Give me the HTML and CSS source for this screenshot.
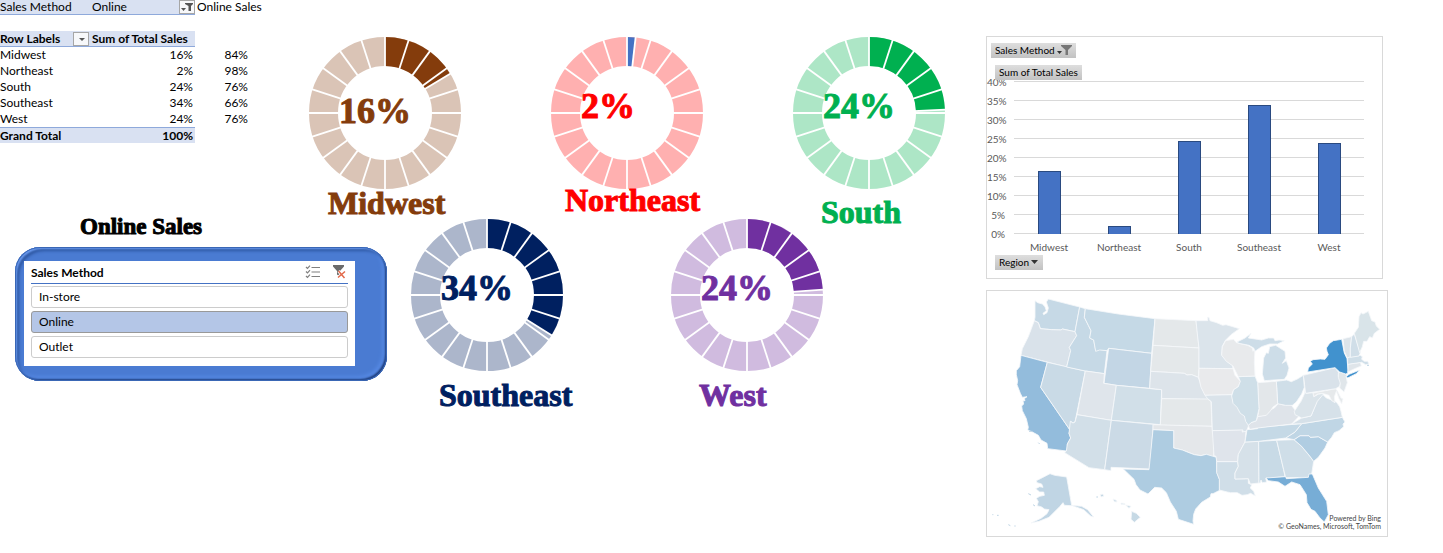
FILE: index.html
```html
<!DOCTYPE html>
<html lang="en">
<head>
<meta charset="utf-8">
<title>Online Sales</title>
<link rel="stylesheet" href="styles.css">
</head>
<body>
<svg class="defs" aria-hidden="true">
  <defs>
    <g id="spokes" stroke="#fff" stroke-width="1.8">
      <path d="M0-78V78"/>
      <path d="M0-78V78" transform="rotate(18)"/>
      <path d="M0-78V78" transform="rotate(36)"/>
      <path d="M0-78V78" transform="rotate(54)"/>
      <path d="M0-78V78" transform="rotate(72)"/>
      <path d="M0-78V78" transform="rotate(90)"/>
      <path d="M0-78V78" transform="rotate(108)"/>
      <path d="M0-78V78" transform="rotate(126)"/>
      <path d="M0-78V78" transform="rotate(144)"/>
      <path d="M0-78V78" transform="rotate(162)"/>
    </g>
  </defs>
</svg>
<main class="sheet">
  <section class="left">
    <table class="pivot">
      <colgroup><col class="col-a"><col class="col-b"><col class="col-c"></colgroup>
      <tbody>
        <tr class="page-filter">
          <td>Sales Method</td>
          <td><div class="cell-flex"><span class="indent">Online</span><button class="cell-btn" type="button" aria-label="Filter Sales Method"><svg width="13" height="12" viewBox="0 0 13 12"><path d="M4 2h8v1L10 5v5H7.500V5L4 3z" fill="#555"/><path d="M0 7h5L2.500 10z" fill="#555"/></svg></button></div></td>
          <td class="plain">Online Sales</td>
        </tr>
        <tr class="blank"><td colspan="3"></td></tr>
        <tr class="head">
          <th scope="col"><div class="cell-flex"><span>Row Labels</span><button class="cell-btn" type="button" aria-label="Filter row labels"><svg width="13" height="12" viewBox="0 0 13 12"><path d="M4 5h6L7 8z" fill="#555"/></svg></button></div></th>
          <th scope="col"><span class="indent">Sum of Total Sales</span></th>
          <td class="plain"></td>
        </tr>
        <tr><td>Midwest</td><td class="num">16%</td><td class="num">84%</td></tr>
        <tr><td>Northeast</td><td class="num">2%</td><td class="num">98%</td></tr>
        <tr><td>South</td><td class="num">24%</td><td class="num">76%</td></tr>
        <tr><td>Southeast</td><td class="num">34%</td><td class="num">66%</td></tr>
        <tr><td>West</td><td class="num">24%</td><td class="num">76%</td></tr>
        <tr class="total"><th scope="row">Grand Total</th><td class="num">100%</td><td class="plain"></td></tr>
      </tbody>
    </table>

    <h1 class="title">Online Sales</h1>

    <div class="frame">
      <div class="slicer">
        <div class="slicer-head">
          <h2>Sales Method</h2>
          <button class="icon-btn" type="button" aria-label="Multi-select">
            <svg width="16" height="14" viewBox="0 0 16 14" fill="none" stroke="#7f7f7f" stroke-width="1.200"><path d="M6.500 2.500H15M6.500 7H15M6.500 11.500H15"/><path d="M1 2l1.500 1.500L5 .7M1 6.500L2.500 8 5 5.200M1 11l1.500 1.500L5 9.700"/></svg>
          </button>
          <button class="icon-btn" type="button" aria-label="Clear filter">
            <svg width="16" height="14" viewBox="0 0 16 14"><path d="M2 0h11v1.500L9 6v3l-1 2-2-1.500V6L2 1.500z" fill="#6b6b6b"/><path d="M7.500 6l6 7M14 6.500l-7 6" stroke="#fff" stroke-width="3"/><path d="M7.500 6l6 7M14 6.500l-7 6" stroke="#e2694a" stroke-width="1.500"/></svg>
          </button>
        </div>
        <div class="slicer-items">
          <button type="button" class="item">In-store</button>
          <button type="button" class="item selected" aria-pressed="true">Online</button>
          <button type="button" class="item">Outlet</button>
        </div>
      </div>
    </div>
  </section>

  <section class="donuts">
    <div class="donut-row">
      <figure class="donut midwest">
        <svg viewBox="-76 -76 152 152"><circle class="rest" r="61.500"/><circle class="part" r="61.500" pathLength="360" stroke-dasharray="59 301" transform="rotate(-90)"/><use href="#spokes"/><path class="cut" d="M0-45V-78" transform="rotate(59)"/></svg>
        <span class="pct">16%</span>
        <figcaption>Midwest</figcaption>
      </figure>
      <figure class="donut northeast">
        <svg viewBox="-76 -76 152 152"><circle class="rest" r="61.500"/><circle class="part" r="61.500" pathLength="360" stroke-dasharray="6.500 353.500" transform="rotate(-90)"/><use href="#spokes"/><path class="cut" d="M0-45V-78" transform="rotate(6.500)"/></svg>
        <span class="pct">2%</span>
        <figcaption>Northeast</figcaption>
      </figure>
      <figure class="donut south">
        <svg viewBox="-76 -76 152 152"><circle class="rest" r="61.500"/><circle class="part" r="61.500" pathLength="360" stroke-dasharray="87.500 272.500" transform="rotate(-90)"/><use href="#spokes"/><path class="cut" d="M0-45V-78" transform="rotate(87.500)"/></svg>
        <span class="pct">24%</span>
        <figcaption>South</figcaption>
      </figure>
    </div>
    <div class="donut-row second">
      <figure class="donut southeast">
        <svg viewBox="-76 -76 152 152"><circle class="rest" r="61.500"/><circle class="part" r="61.500" pathLength="360" stroke-dasharray="122 238" transform="rotate(-90)"/><use href="#spokes"/><path class="cut" d="M0-45V-78" transform="rotate(122)"/></svg>
        <span class="pct">34%</span>
        <figcaption>Southeast</figcaption>
      </figure>
      <figure class="donut west">
        <svg viewBox="-76 -76 152 152"><circle class="rest" r="61.500"/><circle class="part" r="61.500" pathLength="360" stroke-dasharray="86 274" transform="rotate(-90)"/><use href="#spokes"/><path class="cut" d="M0-45V-78" transform="rotate(86)"/></svg>
        <span class="pct">24%</span>
        <figcaption>West</figcaption>
      </figure>
    </div>
  </section>

  <section class="right">
    <div class="card chart">
      <button class="field" type="button">Sales Method <svg width="15" height="10" viewBox="0 0 15 10"><path d="M0 6h5L2.500 9z" fill="#333"/><path d="M4 0h11v1L11 5v5H8.500V5L4 1z" fill="#777"/></svg></button>
      <button class="field inset" type="button">Sum of Total Sales</button>
      <div class="plot-wrap">
        <div class="ticks"><span>40%</span><span>35%</span><span>30%</span><span>25%</span><span>20%</span><span>15%</span><span>10%</span><span>5%</span><span>0%</span></div>
        <div class="plot">
          <div class="lines"><i></i><i></i><i></i><i></i><i></i><i></i><i></i><i></i><i></i></div>
          <div class="bars">
            <div class="bar" style="height:41%"></div>
            <div class="bar" style="height:5%"></div>
            <div class="bar" style="height:61%"></div>
            <div class="bar" style="height:84.5%"></div>
            <div class="bar" style="height:59.5%"></div>
          </div>
        </div>
      </div>
      <div class="cats"><span>Midwest</span><span>Northeast</span><span>South</span><span>Southeast</span><span>West</span></div>
      <button class="field inset" type="button">Region <svg width="8" height="6" viewBox="0 0 8 6"><path d="M0 1h7L3.500 5z" fill="#333"/></svg></button>
    </div>

    <div class="card map">
      <svg viewBox="6 9 1200 735" role="img" aria-label="Sales by state">
        <g class="states">
          <path fill="#c6d9e6" d="M150 38l8 6 14 4 8 8 4 12-10 8 2 4 10-6 4-14-6-18 6-9 94 24-14 74-38-8-4 3-28-1-34-3-6-18-12-6 2-10z"/>
          <path fill="#d9e2ea" d="M148 98l12 6 6 18 34 3 28 1 4-3 38 8 5 12-12 19-10 16 4 10-12 49-137-35 4-20 18-36z"/>
          <path fill="#93bcdc" d="M108 202l79 21-20 75 88 128-3 10 5 14-10 18 0 16-3 5-56-7-2-16-18-10-8-14-18-10-14-6 2-8-6-26-12-24-2-14 6-6-2-10 6 0-2-6 8-6-14 2-6-12-10-26 2-12-4-18 0-12 10-12z"/>
          <path fill="#c9dae6" d="M187 223l114 26-31 153-6 3-7-5-2 26-88-128z"/>
          <path fill="#c6d9e6" d="M284 57l17 5-3 26 12 24 8 16-4 22 12 6 6 30 12-2 22 4-8 69-57-8-56-12 12-49-4-10 10-16 12-19-5-12z"/>
          <path fill="#c5d9e6" d="M301 62l99 16 110 14-10 104-129-15-5 7-22-2-12 4-6-34-12-6 4-22-8-16-12-24z"/>
          <path fill="#c3d6e5" d="M371 181l129 15-6 105-100-9-37-6z"/>
          <path fill="#dfe5eb" d="M301 249l57 8-2 29 38 6-15 105-103-17z"/>
          <path fill="#d1dfe8" d="M394 292l136 13-4 105-147-13z"/>
          <path fill="#d2dfe8" d="M276 380l103 17-20 148-47-6-73-45 5-5 3-21 10-18-5-14 4-36 8 5 6-3z"/>
          <path fill="#cbdae6" d="M379 397l126 12-10 134-117-5v10l-19-3z"/>
          <path fill="#e4e8ea" d="M510 92l123 6 5 40 4 42-138-8z"/>
          <path fill="#e4e8ea" d="M504 172l138 8v60l-2 28-20-8-14 1-8-5-101-6z"/>
          <path fill="#dde4ea" d="M497 250l101 6 8 5 14-1 20 8 10 30 10 22 8 8 10 7-148-3v-27l-36-4z"/>
          <path fill="#e4e8ea" d="M530 332l138 1 10 8 3 74-155-3z"/>
          <path fill="#e4e7ea" d="M504 410l177 5 6 50-1 42-22-8-16 4-20-3-16-6-20-8-26-6v-52l-62-3z"/>
          <path fill="#aecce1" d="M504 425l62 3v52l26 6 20 8 16 6 20 3 16-4 31 9 1 47 8 20 0 32-20 10-6 0-2 10-26 16-18 20-6 16-2 20 2 10-46-15-6-24-18-28-12-28-14-14-21-2-20 20-24-12-12-16-6-16-32-31 77 2z"/>
          <path fill="#dbe4eb" d="M633 98h35l0-10 4 0 3 10 20 6 18 8 10-2 40 12-25 18-16 16-10 18-2 26 14 18 18 14 2 10-102-1v-61l-5-42z"/>
          <path fill="#e9eaec" d="M642 241l102 1 6 20 16 18-6 16-14 9-6 15-80 2-12-24-7-32z"/>
          <path fill="#dae3ea" d="M660 322l80-2 4 20 12 12 10 18 12 8 4 16 10 16-6 15-4 6-12 1 4-5-92 1-3-87-12-10z"/>
          <path fill="#dfe4eb" d="M682 428l92-2-3 6 12-2-3 32-10 18-10 20-2 21-63 0-2-16-6-2z"/>
          <path fill="#d0dee8" d="M695 521h63l2 14-10 20v18l40-1 0 14 10 4-4 10 10 10 5 14-14-8-10 4-16 2-14-8-20 0-10-2-24-6 0-32-8-20z"/>
          <path fill="#d6e1e9" d="M780 462l41-2 1 125-26 3-6-16-40 1v-18l10-20-2-14 2-22z"/>
          <path fill="#c8dae6" d="M821 460l54-3 21 88 4 21-58 5 3 11-13 2-4-8-2 9-4 0z"/>
          <path fill="#cfdee8" d="M875 457l52-2 23 20 25 30 11 15-6 38-10 10-68 1-6-24z"/>
          <path fill="#77add6" d="M843 570l59-4 2 6 66-4 2-10 10 0 18 42 25 40 5 40-12 22-13-12-15-20-12-6-12-20-2-24-19-30-25-8-20 13-20-13-30-4z"/>
          <path fill="#b0cde2" d="M927 455l18-12 27 0 4 5 24-2 28 16-8 18-20 28-14 12-11-15-25-30z"/>
          <path fill="#c0d6e5" d="M902 450l28-18 20-25 122-19 8 14-6 6 2 8-14 12-14 6-8 14-12 14-28-16-24 2-4-5-27 0-18 12z"/>
          <path fill="#c5d9e6" d="M786 425l32-3v-4l132-11-20 25-28 18-81 10-41 2z"/>
          <path fill="#dfe4ea" d="M790 412l8-8 16-6 4-12 26-6 12-14 12-6 12-13 16 4 22-1 12 16 12 19-22 23-102 12-24 4z"/>
          <path fill="#d6e1e9" d="M920 408l30-18 28-6 18-44 16-22 12 12 16 6 14 6 10 14 4 14 4 18-122 19z"/>
          <path fill="#dbe4ea" d="M928 370l20-30 10-22 3-18 2 16 22-2 2 12 14-8 16-2-20 24-19 44-28 6-20-10z"/>
          <path fill="#e6e9eb" d="M984 315l68-13 6 8 10 20 6 2-4 16-8-16-8-22-6 16 2 18-10-6-8-16-20-6-14 2-12 8z"/>
          <path fill="#d9e2ea" d="M955 262l95-23 12 16-2 8 7 18-3 14-12 7-90 14z"/>
          <path fill="#e0e6ea" d="M1060 255l6-3 18 6 1 6-2 0 4 20-10 28-13-12 2-14-6-18z"/>
          <path fill="#4192ce" d="M970 240l12-12-6-8 8-5 22-2 14 1 10-14-4-10-2-10 10-14 11-8 25-4 8 41 8 17 3 34-1 10-6 2-18-6-14-13-82 13z"/>
          <path fill="#4192ce" d="M1084 266l8-7 32-13-10 11-26 13z"/>
          <path fill="#dfe5ea" d="M1089 228l37-5 3 11-20 8-20 10z"/>
          <path fill="#cfdee8" d="M1088 208l38-6 6 4-2 8 8 6 10 0 4 8-10 2-12-7-42 6z"/>
          <path fill="#dce4ea" d="M1074 152l26-6-4 34 0 26-9 4-9-20z"/>
          <path fill="#d0dee8" d="M1100 146l8-8 18 56-4 10-26 4v-28z"/>
          <path fill="#d9e4e9" d="M1108 136l12-18 2-32 6-12 6 4 16-8 10 28 10 4 4 12 10 10-16 12-6 14-8-4-8 14-10 0-4 16-8 18z"/>
          <path fill="#cfdee8" d="M874 280l31-4 14 5 18-8 18-11 3 36-8 20-16 24-12 10-20 0-24-5z"/>
          <path fill="#e3e7ea" d="M818 284l56-4 4 67-14 10-8 12-12 13-26 4 4-20z"/>
          <path fill="#cfdfe8" d="M760 266l50-2 8 20 4 78-8 36-16 6-8 8-8-12-4-16-12-8-10-18-12-12-4-22 6-19 14-9 6-16z"/>
          <path fill="#e8eaec" d="M722 158l24-4 8 10 34 8 14 8 2 10 6-10-2 40 2 44-50 2-16-32-20-14-14-18 2-26z"/>
          <path fill="#cddde8" d="M756 162l24-12 18-14-8 14 14 2 26 4 20-6 16 0 4 8 12-2 16 2-20 10-24 0-24 8-20 14-4-10-14-8-30-6z"/>
          <path fill="#cddde8" d="M838 278l-6-20 4-48 8-16 6 2 4-20 18-4 28 18 2 20-10 16 12-8 8 22-6 22-8 12z"/>
          <path fill="#c0d5e4" d="M195 557l14 5 36 5 15 85 30 3 18 10 18 22-8-2-22-20-34-12-24-1-4-8-10 12-16 16-16 16-30 12-24 5 30-14 18-14 6-12-14-2-8-6-14-4 4-12-6-10 10-6 14-3-2-10-12 0-12-10 12-6 10 2-4-10-14-4-2-6 12-6z"/>
          <path fill="#c6d9e5" d="M440 670l14 6 12 12-18 15-10-9zM345 620l8-2 4 6-8 3zM384 633l10 4 2 5-8-1zM408 645l12 2 0 3-12-1zM422 651l16 4-6 6z"/>
        </g>
        <path d="M132 430h10M160 464l4 4M144 650l6 4M130 617l8 4M22 680h3M36 682h5M70 710l6 3M88 714h4M334 627h5M1146 232h6" stroke="#bfd5e5" stroke-width="3"/>
      </svg>
      <p class="credit">Powered by Bing<br>© GeoNames, Microsoft, TomTom</p>
    </div>
  </section>
</main>
</body>
</html>
```
FILE: styles.css
```css
* { box-sizing: border-box; }

body {
  margin: 0;
  background: #fff;
  color: #000;
  font-family: Lato, "Open Sans", sans-serif;
  font-size: 12px;
}

button {
  font: inherit;
  color: inherit;
  cursor: pointer;
}

.defs { position: absolute; width: 0; height: 0; }

.sheet {
  display: grid;
  grid-template-columns: 309px minmax(635px, 1fr) 402px;
  align-items: start;
  padding-right: 55px;
}

/* Pivot table */
.pivot {
  border-collapse: separate;
  border-spacing: 0;
  table-layout: fixed;
  width: 250px;
  line-height: 14px;
}
.col-a { width: 89px; }
.col-b { width: 106px; }
.col-c { width: 55px; }
.pivot tr { height: 16px; }
.pivot td, .pivot th {
  padding: 0;
  text-align: left;
  white-space: nowrap;
}
.pivot .num { text-align: right; padding-right: 2px; }
.page-filter td, .head th {
  background: #d9e1f2;
  border-bottom: 1px solid #8ea9db;
}
.pivot .page-filter { height: 15px; }
.total th, .total td {
  background: #d9e1f2;
  border-top: 1px solid #8ea9db;
  font-weight: bold;
}
.pivot td.plain {
  background: none;
  border-color: transparent;
  padding-left: 2px;
}
.indent { padding-left: 3px; }
.cell-flex {
  display: flex;
  align-items: center;
  justify-content: space-between;
  height: 14px;
}
.cell-btn {
  display: flex;
  align-items: center;
  justify-content: center;
  width: 16px;
  height: 14px;
  padding: 0;
  border: 1px solid #a6a6a6;
  background: #f7f8fa;
}

/* Slicer */
.title {
  margin: 70px 0 0 80px;
  font: bold 23px/28px "Liberation Serif", serif;
  -webkit-text-stroke: 1px;
}
.frame {
  width: 372px;
  margin: 6px 0 0 15px;
  padding: 14px 32px 15px 9px;
  border-radius: 25px;
  background: #4a7bd2;
  box-shadow:
    inset 0 0 0 1px #3a67b5,
    inset 2px 2px 2px #6b9bf0,
    inset 4px 4px 3px #2c559f,
    inset -2px -2px 2px #1d3d7c,
    inset -4px -4px 4px #5a8eea;
}
.slicer {
  padding: 2px 7px 8px;
  background: #fff;
}
.slicer-head {
  display: flex;
  align-items: center;
  height: 21px;
  gap: 10px;
  padding: 0 1px 2px 0;
  border-bottom: 1px solid #4472c4;
}
.slicer-head h2 {
  flex: 1;
  margin: 0;
  font-size: 12px;
}
.icon-btn {
  display: flex;
  padding: 0;
  border: 0;
  background: none;
}
.slicer-items {
  display: grid;
  gap: 3px;
  padding-top: 2px;
}
.item {
  height: 22px;
  padding: 0 7px 2px;
  border: 1px solid #ccc;
  border-radius: 3px;
  background: #fff;
  text-align: left;
}
.item.selected {
  background: #b4c6e7;
  border-color: #999;
}

/* Donut charts */
.donuts { padding-top: 37px; }
.donut-row { display: flex; gap: 90px; align-items: flex-start; }
.donut-row.second { gap: 108px; padding-left: 102px; }
.donut {
  position: relative;
  width: 152px;
  margin: 0;
  color: var(--c);
  font-family: "Liberation Serif", serif;
  font-weight: bold;
  white-space: nowrap;
  -webkit-text-stroke: 1px;
}
.donut > svg { display: block; width: 100%; }
.rest, .part { fill: none; stroke-width: 29; }
.rest { stroke: var(--pale); }
.part { stroke: var(--fill, var(--c)); }
.cut { stroke: #fff; stroke-width: 1.8; }
.pct {
  position: absolute;
  left: 30px;
  top: 51px;
  font-size: 36px;
  line-height: 36px;
}
.donut figcaption {
  margin: 15px 0 0 28px;
  font-size: 32px;
  line-height: 18px;
}
.midwest .pct { top: 56px; }
.midwest { --c: #843c0c; --pale: #dac4b6; }
.midwest figcaption { margin: 5px 0 0 19px; }
.northeast { --c: #f00; --pale: #ffb0b0; --fill: #4472c4; }
.northeast figcaption { margin: 2px 0 0 14px; }
.south { --c: #00b050; --pale: #ade6c6; }
.south figcaption { margin: 14px 0 -2px 28px; }
.southeast { --c: #002060; --pale: #acb6cb; }
.west { --c: #7030a0; --pale: #d0bbdf; }

/* Right-hand cards */
.right { display: grid; gap: 11px; padding-top: 36px; }
.card { border: 1px solid #d9d9d9; background: #fff; }

.chart {
  display: flex;
  flex-direction: column;
  align-items: flex-start;
  margin-right: 5px;
  padding: 6px 18px 8px 0;
  font-size: 10px;
  line-height: 12px;
}
.field {
  position: relative;
  z-index: 1;
  display: flex;
  align-items: center;
  gap: 2px;
  height: 15px;
  margin: 0 0 7px 4px;
  padding: 0 4px 1px;
  border: 0;
  background: linear-gradient(#dedede, #c2c2c2);
}
.field.inset { margin: 0 0 0 8px; }
.plot-wrap {
  display: flex;
  width: 100%;
  margin-top: -4px;
  color: #595959;
}
.ticks {
  display: flex;
  flex-direction: column;
  justify-content: space-between;
  width: 18px;
  height: 164px;
  margin-right: 9px;
  text-align: right;
}
.plot {
  display: grid;
  flex: 1;
  height: 153px;
  margin-top: 5px;
}
.lines, .bars { grid-area: 1 / 1; }
.lines {
  display: flex;
  flex-direction: column;
  justify-content: space-between;
}
.lines i { height: 1px; background: #d9d9d9; }
.bars {
  display: flex;
  align-items: flex-end;
  justify-content: space-around;
}
.bar {
  width: 23px;
  background: #4472c4;
  border: 1px solid #2a4a80;
  border-bottom: 0;
}
.cats {
  display: grid;
  grid-template-columns: repeat(5, 1fr);
  align-self: stretch;
  margin: 1px 0 2px;
  padding-left: 27px;
  color: #595959;
  text-align: center;
}

.map { position: relative; }
.map > svg { display: block; width: 100%; }
.states path {
  stroke: #f5f8fa;
  stroke-width: 2.5;
  stroke-linejoin: round;
}
.credit {
  position: absolute;
  right: 6px;
  bottom: 6px;
  margin: 0;
  color: #444;
  font-size: 7px;
  line-height: 8px;
  text-align: right;
}
```
